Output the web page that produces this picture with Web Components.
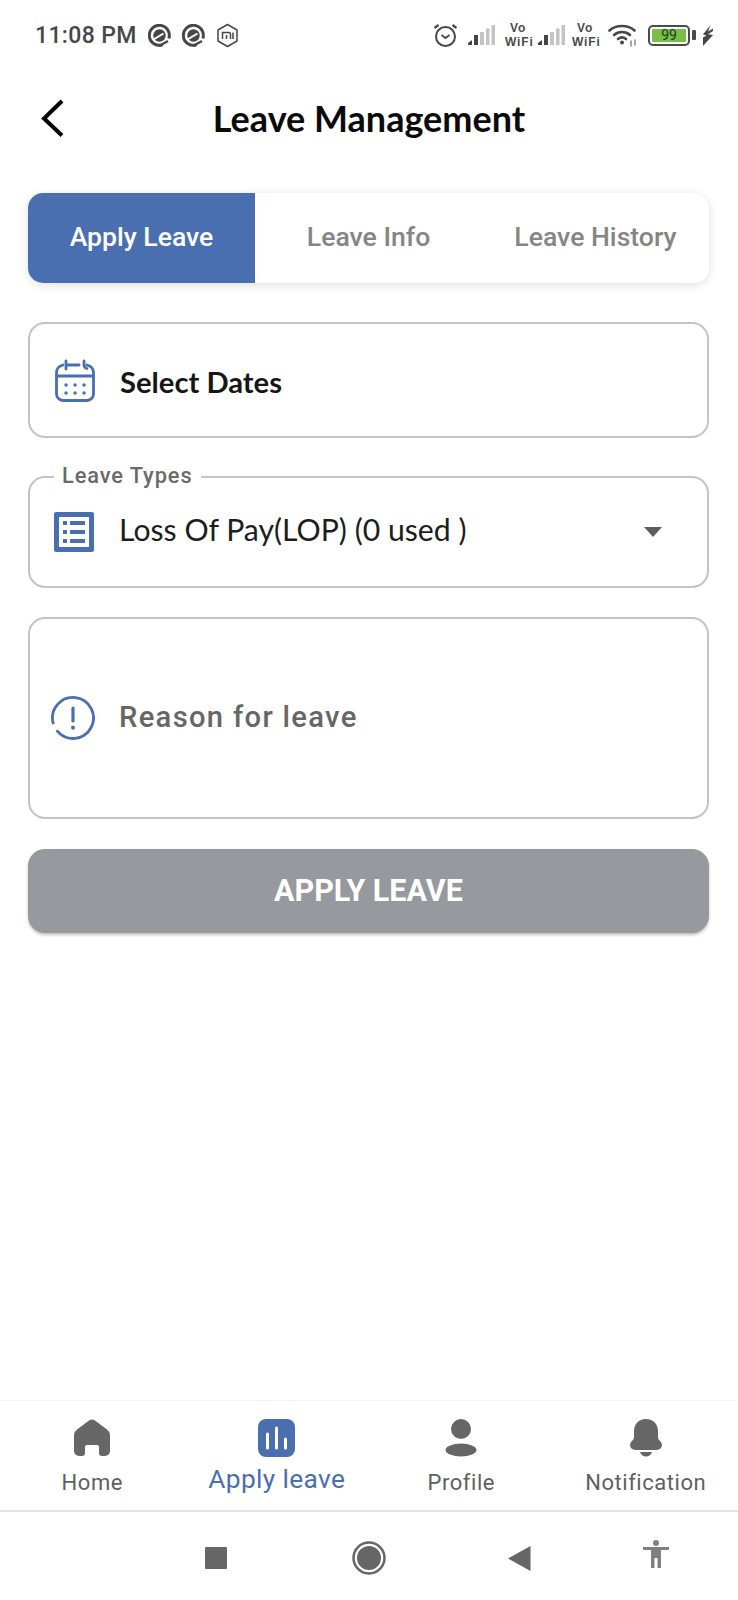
<!DOCTYPE html>
<html lang="en"><head><meta charset="utf-8"><title>Leave Management</title>
<style>
html,body{margin:0;padding:0;background:#fff}
body{font-family:Roboto,sans-serif}
</style></head><body>
<app-shell>
  <status-bar></status-bar>
  <app-header title="Leave Management"></app-header>
  <leave-tabs></leave-tabs>
  <date-field label="Select Dates"></date-field>
  <select-field legend="Leave Types" value="Loss Of Pay(LOP) (0 used )"></select-field>
  <reason-field placeholder="Reason for leave"></reason-field>
  <apply-button label="APPLY LEAVE"></apply-button>
  <bottom-nav></bottom-nav>
  <system-nav></system-nav>
</app-shell>
<script>
function def(name, css, html){
  customElements.define(name, class extends HTMLElement{
    connectedCallback(){
      if(this.shadowRoot) return;
      const r=this.attachShadow({mode:'open'});
      const a=n=>this.getAttribute(n)||'';
      r.innerHTML='<style>'+css+'</style>'+html(a);
    }
  });
}
const BLUE='#4a6fb0';
const bars=`<path d="M1 20v-2l4-3v5z" fill="#444"/><rect x="7" y="10" width="4" height="10" fill="#444"/><rect x="13" y="7" width="4" height="13" fill="#c4c4c4"/><rect x="19" y="3.5" width="3.5" height="16.5" fill="#c4c4c4"/><rect x="24.5" y="0" width="3.5" height="20" fill="#c4c4c4"/>`;
def('app-shell',`:host{display:flex;flex-direction:column;width:738px;height:1600px;background:#fff;overflow:hidden}
 ::slotted(*){flex:none}`,()=>`<slot></slot>`);

def('status-bar',`:host{display:flex;align-items:center;height:70px;padding:0 24px 0 35px;box-sizing:border-box;color:#444}
 .t{font:500 23px/1 Roboto,sans-serif;letter-spacing:.35px;color:#474747;margin-right:11px}
 .l{display:flex;align-items:center;gap:11px}
 .r{display:flex;align-items:center;margin-left:auto}
 svg{display:block}
 .vo{font:700 12px/14px "Liberation Sans",sans-serif;color:#4a4a4a;text-align:center;width:26px;letter-spacing:.9px}
 .bat{width:42px;height:21px;box-sizing:border-box;border:2.5px solid #4a4a4a;border-radius:5px;padding:2px;display:flex}
 .bat span{flex:1;background:#76c043;border-radius:1px;font:400 14px/12px Roboto,sans-serif;color:#1d3a10;text-align:center}
`,()=>`
 <span class="t">11:08 PM</span>
 <div class="l">
  ${[0,0].map(()=>`<svg width="23" height="23" viewBox="0 0 23 23" fill="none" stroke="#474747"><path d="M14.5 20.8A10 10 0 1 1 20.8 14.5" stroke-width="3"/><circle cx="11.5" cy="11.5" r="6.2" fill="#474747" stroke="none"/><path d="M5.5 15.5l10-6" stroke="#fff" stroke-width="2"/><path d="M11 22l9-5" stroke-width="2.4"/></svg>`).join('')}
  <svg width="23" height="25" viewBox="0 0 23 25" fill="none" stroke="#474747" stroke-width="1.5"><path d="M11.5 1.5l9.5 5.5v11l-9.5 5.5L2 18V7z" stroke-linejoin="round"/><path d="M6.5 16v-6.5h6.5a1.5 1.5 0 0 1 1.5 1.5v5M10.5 12v4M17 9.5V16"/></svg>
 </div>
 <div class="r">
  <svg width="25" height="25" viewBox="0 0 25 25" fill="none" stroke="#474747" stroke-width="2" style="margin-right:9px"><circle cx="12.5" cy="13.5" r="9.5"/><path d="M8.5 12l4 3 4-3" stroke-width="1.8"/><path d="M1.5 5l4-3M23.5 5l-4-3" stroke-width="2.2"/></svg>
  <svg width="28" height="20" viewBox="0 0 28 20" style="margin-right:10px">${bars}</svg>
  <span class="vo">Vo<br>WiFi</span>
  <svg width="28" height="20" viewBox="0 0 28 20" style="margin:0 7px 0 6px">${bars}</svg>
  <span class="vo">Vo<br>WiFi</span>
  <svg width="30" height="24" viewBox="0 0 30 24" fill="none" stroke="#474747" stroke-width="2.6" stroke-linecap="round" style="margin:0 10px 0 10px"><path d="M1.5 7.5C8 1.5 20 1.5 26.5 7.5"/><path d="M6 12c4.500-4 11.500-4 16 0"/><path d="M10 16c2.500-2 5.500-2 8 0"/><circle cx="14" cy="19.5" r="2" fill="#474747" stroke="none"/><path d="M23 18v5M27 17v5" stroke-width="1.3" stroke="#777"/></svg>
  <div class="bat"><span>99</span></div>
  <svg width="4" height="10" style="margin:0 6px 0 2px"><rect width="4" height="10" rx="1" fill="#4a4a4a"/></svg>
  <svg width="12" height="21" viewBox="0 0 12 21"><path d="M8.5 0L1 9.5l3.5 1L1 12.5V15l0 6 10-11-5-.8L11 6V3.5L6 6.500z" fill="#474747"/></svg>
 </div>`);

def('app-header',`:host{display:flex;align-items:center;justify-content:center;position:relative;height:96px}
 h1{margin:0;font:700 36px/1 Lato,sans-serif;color:#0b0b0b}
 svg{position:absolute;left:40px;top:28px}`,a=>`
 <svg width="26" height="40" viewBox="0 0 26 40" fill="none" stroke="#000" stroke-width="4"><path d="M22 3L4 20.5 22 37.5"/></svg>
 <h1>${a('title')}</h1>`);

def('leave-tabs',`:host{display:grid;grid-template-columns:repeat(3,1fr);height:90px;margin:27px 29px 0 28px;border-radius:15px;background:#fff;box-shadow:0 2px 9px rgba(0,0,0,.13);overflow:hidden}
 div{display:flex;align-items:center;justify-content:center;font:500 26.6px/1 Roboto,sans-serif;color:#858585;padding-bottom:2px}
 .on{background:${BLUE};color:#fff}`,()=>`<div class="on">Apply Leave</div><div>Leave Info</div><div>Leave History</div>`);

const box=`box-sizing:border-box;margin-left:28px;margin-right:29px;border:2px solid #c4c4c4;border-radius:17px;background:#fff;`;
def('date-field',`:host{display:flex;align-items:center;${box}height:116px;margin-top:39px;padding-left:25px}
 span{font:700 29.2px/1 Lato,sans-serif;color:#161616;margin-left:25px;padding-top:3px}svg{display:block}`,a=>`
 <svg width="40" height="43" viewBox="0 0 40 43" fill="none" stroke="${BLUE}" stroke-width="2.8" stroke-linecap="round"><path d="M8 6C4 7 1.5 10 1.5 14V35A6.5 6.5 0 0 0 8 41.5H32A6.5 6.5 0 0 0 38.5 35V14C38.5 10 36 7 32 6"/><path d="M11 2v8M29 2v3.5c0 2 1 3.5 3 4M11 6H24M2 17H38"/><path stroke-width="3.4" d="M11 26h.1M20 26h.1M29 26h.1M11 34h.1M20 34h.1M29 34h.1"/></svg>
 <span>${a('label')}</span>`);

def('select-field',`:host{display:flex;align-items:flex-start;position:relative;${box}height:112px;margin-top:38px;padding:32px 0 0 24px}
 .lg{position:absolute;left:24px;top:-14px;padding:0 8px;background:#fff;font:500 21.8px/24px Roboto,sans-serif;letter-spacing:.9px;color:#6a6a6a}
 .v{font:400 30.2px/38px Lato,sans-serif;color:#1d1d1d;margin-left:25px}
 svg{display:block;flex:none}
 .car{position:absolute;right:45px;top:49px;width:0;height:0;border:9px solid transparent;border-top:10px solid #5d5d5d;border-bottom:0}`,a=>`
 <span class="lg">${a('legend')}</span>
 <svg width="40" height="40" viewBox="0 0 40 40" style="margin-top:2px"><path fill="${BLUE}" fill-rule="evenodd" d="M0 2a2 2 0 0 1 2-2h36a2 2 0 0 1 2 2v36a2 2 0 0 1-2 2H2a2 2 0 0 1-2-2zM5 5v30h30V5z"/><path fill="${BLUE}" d="M9 9h4v4H9zM16 9h15v4H16zM9 18h4v4H9zM16 18h15v4H16zM9 27h4v4H9zM16 27h15v4H16z"/></svg>
 <span class="v">${a('value')}</span>
 <span class="car"></span>`);

def('reason-field',`:host{display:flex;align-items:center;${box}height:202px;margin-top:29px;padding-left:21px}
 span{font:500 29.2px/1 Roboto,sans-serif;letter-spacing:1.3px;color:#666;margin-left:24px}svg{display:block;flex:none}`,a=>`
 <svg width="44" height="44" viewBox="0 0 44 44" fill="none" stroke="${BLUE}" stroke-width="2.8" stroke-linecap="round"><path d="M2.1 27A20.5 20.5 0 1 1 6.3 35.2"/><path d="M22 12v13" stroke-width="3.2"/><path d="M22 31.5v.3" stroke-width="3.8"/></svg>
 <span>${a('placeholder')}</span>`);

def('apply-button',`:host{display:flex;align-items:center;justify-content:center;height:84px;margin:30px 29px 0 28px;border-radius:17px;background:#96999e;box-shadow:0 2px 3px rgba(0,0,0,.25);font:700 30.5px/1 Roboto,sans-serif;color:#fff}`,a=>a('label'));

def('bottom-nav',`:host{display:grid;grid-template-columns:repeat(4,1fr);height:112px;margin-top:auto;box-sizing:border-box;border-top:1px solid #f3f3f3;border-bottom:2px solid #e4e4e4;padding-top:18px}
 div{display:flex;flex-direction:column;align-items:center;font:400 22px/28px Roboto,sans-serif;letter-spacing:.55px;color:#5f5f5f}
 svg{display:block;margin-bottom:12px}
 .on{color:${BLUE};font-size:26.3px;letter-spacing:.35px}.on svg{margin-bottom:8px}`,()=>`
 <div><svg width="38" height="38" viewBox="0 0 38 38"><path fill="#666" d="M16 1.5a5 5 0 0 1 6 0l12 9a7 7 0 0 1 3 5.5V32a5 5 0 0 1-5 5h-3a3 3 0 0 1-3-3v-6a2 2 0 0 0-2-2H14a2 2 0 0 0-2 2v6a3 3 0 0 1-3 3H6a5 5 0 0 1-5-5V16a7 7 0 0 1 3-5.5z"/></svg>Home</div>
 <div class="on"><svg width="38" height="38" viewBox="0 0 38 38"><rect width="37" height="38" rx="8" fill="${BLUE}"/><path d="M9.5 15v14M18.5 9v20M27.5 20v9" stroke="#fff" stroke-width="3" stroke-linecap="round"/></svg>Apply leave</div>
 <div><svg width="32" height="38" viewBox="0 0 32 38"><circle cx="16" cy="10" r="10" fill="#666"/><ellipse cx="16" cy="31" rx="15.5" ry="6.5" fill="#666"/></svg>Profile</div>
 <div><svg width="34" height="38" viewBox="0 0 34 38"><path fill="#666" d="M17 0c7.5 0 12 5.5 12 12v6c0 2 1 3 2.5 4.5 3 3.5 1 8.5-4 8.5H6.5c-5 0-7-5-4-8.5C4 21 5 20 5 18v-6C5 5.5 9.5 0 17 0z"/><path fill="#666" d="M11 33h12c-1 3-3.5 4.5-6 4.5S12 36 11 33z"/></svg>Notification</div>`);

def('system-nav',`:host{display:block;position:relative;height:88px}
 svg{position:absolute}`,()=>`
 <svg style="left:205px;top:35px" width="22" height="22"><rect width="22" height="22" rx="1" fill="#666"/></svg>
 <svg style="left:352px;top:29px" width="34" height="34"><circle cx="17" cy="17" r="15.5" fill="none" stroke="#666" stroke-width="2.5"/><circle cx="17" cy="17" r="12" fill="#666"/></svg>
 <svg style="left:508px;top:34px" width="23" height="25"><path d="M0 12.5L22.5 0v25z" fill="#666"/></svg>
 <svg style="left:643px;top:28px" width="26" height="28" viewBox="0 0 26 28"><circle cx="13" cy="3" r="3" fill="#808080"/><path fill="#808080" d="M0 7h26v3h-8v18h-3.5V18h-3v10H8V10H0z"/></svg>`);
</script>
</body></html>
